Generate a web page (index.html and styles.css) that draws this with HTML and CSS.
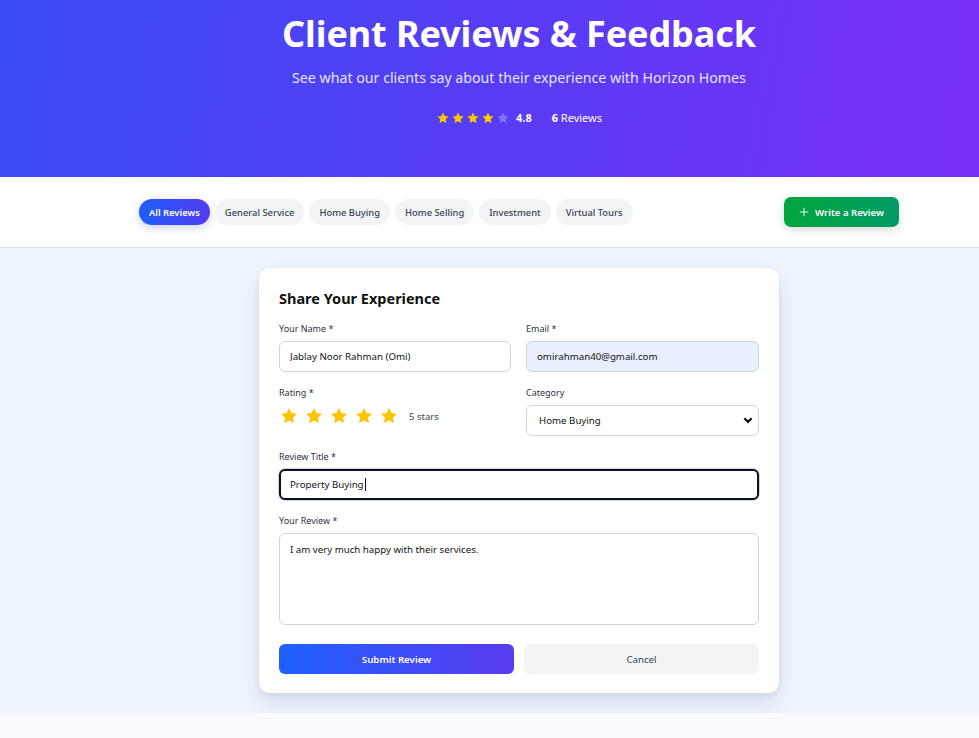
FILE: index.html
```html
<!DOCTYPE html>
<html lang="en">
<head>
<meta charset="utf-8">
<title>Client Reviews &amp; Feedback</title>
<link rel="stylesheet" href="styles.css">
</head>
<body>
<div class="page">
  <header class="hero">
    <h1 class="hero-title">Client Reviews &amp; Feedback</h1>
    <p class="hero-sub">See what our clients say about their experience with Horizon Homes</p>
    <div class="hero-stats">
      <div class="hero-stars">
        <svg class="hstar on" viewBox="0 0 24 24"><path d="M12 2.5l2.9 6 6.6.9-4.8 4.6 1.2 6.5L12 17.4l-5.9 3.1 1.2-6.5-4.8-4.6 6.6-.9z"/></svg>
        <svg class="hstar on" viewBox="0 0 24 24"><path d="M12 2.5l2.9 6 6.6.9-4.8 4.6 1.2 6.5L12 17.4l-5.9 3.1 1.2-6.5-4.8-4.6 6.6-.9z"/></svg>
        <svg class="hstar on" viewBox="0 0 24 24"><path d="M12 2.5l2.9 6 6.6.9-4.8 4.6 1.2 6.5L12 17.4l-5.9 3.1 1.2-6.5-4.8-4.6 6.6-.9z"/></svg>
        <svg class="hstar on" viewBox="0 0 24 24"><path d="M12 2.5l2.9 6 6.6.9-4.8 4.6 1.2 6.5L12 17.4l-5.9 3.1 1.2-6.5-4.8-4.6 6.6-.9z"/></svg>
        <svg class="hstar off" viewBox="0 0 24 24"><path d="M12 2.5l2.9 6 6.6.9-4.8 4.6 1.2 6.5L12 17.4l-5.9 3.1 1.2-6.5-4.8-4.6 6.6-.9z"/></svg>
      </div>
      <span class="hero-score">4.8</span>
      <span class="hero-count"><b>6</b> Reviews</span>
    </div>
  </header>

  <nav class="filterbar">
    <div class="filter-inner">
      <div class="pills">
        <button class="pill active">All Reviews</button>
        <button class="pill">General Service</button>
        <button class="pill">Home Buying</button>
        <button class="pill">Home Selling</button>
        <button class="pill">Investment</button>
        <button class="pill">Virtual Tours</button>
      </div>
      <button class="write-btn">
        <svg class="plus" viewBox="0 0 12 12"><path d="M6 1v10M1 6h10"/></svg>
        Write a Review
      </button>
    </div>
  </nav>

  <main class="main">
    <form class="card">
      <h2 class="card-title">Share Your Experience</h2>
      <div class="grid2">
        <div class="field">
          <label class="label">Your Name *</label>
          <input class="input" type="text" value="Jablay Noor Rahman (Omi)">
        </div>
        <div class="field">
          <label class="label">Email *</label>
          <input class="input autofill" type="email" value="omirahman40@gmail.com">
        </div>
      </div>
      <div class="grid2">
        <div class="field">
          <label class="label">Rating *</label>
          <div class="rating">
            <svg class="rstar" viewBox="0 0 24 24"><path d="M12 2.5l2.9 6 6.6.9-4.8 4.6 1.2 6.5L12 17.4l-5.9 3.1 1.2-6.5-4.8-4.6 6.6-.9z"/></svg>
            <svg class="rstar" viewBox="0 0 24 24"><path d="M12 2.5l2.9 6 6.6.9-4.8 4.6 1.2 6.5L12 17.4l-5.9 3.1 1.2-6.5-4.8-4.6 6.6-.9z"/></svg>
            <svg class="rstar" viewBox="0 0 24 24"><path d="M12 2.5l2.9 6 6.6.9-4.8 4.6 1.2 6.5L12 17.4l-5.9 3.1 1.2-6.5-4.8-4.6 6.6-.9z"/></svg>
            <svg class="rstar" viewBox="0 0 24 24"><path d="M12 2.5l2.9 6 6.6.9-4.8 4.6 1.2 6.5L12 17.4l-5.9 3.1 1.2-6.5-4.8-4.6 6.6-.9z"/></svg>
            <svg class="rstar" viewBox="0 0 24 24"><path d="M12 2.5l2.9 6 6.6.9-4.8 4.6 1.2 6.5L12 17.4l-5.9 3.1 1.2-6.5-4.8-4.6 6.6-.9z"/></svg>
            <span class="rating-text">5 stars</span>
          </div>
        </div>
        <div class="field">
          <label class="label">Category</label>
          <div class="select-wrap">
            <select class="input select">
              <option>Home Buying</option>
            </select>
            <svg class="chev" viewBox="0 0 12 12"><path d="M2.3 4.2L6 7.9l3.7-3.7"/></svg>
          </div>
        </div>
      </div>
      <div class="field">
        <label class="label">Review Title *</label>
        <div class="input focused">Property Buying<span class="caret"></span></div>
      </div>
      <div class="field">
        <label class="label">Your Review *</label>
        <textarea class="input textarea">I am very much happy with their services.</textarea>
      </div>
      <div class="actions">
        <button type="button" class="btn submit">Submit Review</button>
        <button type="button" class="btn cancel">Cancel</button>
      </div>
    </form>
  </main>
  <div class="after"></div>
</div>
</body>
</html>
```

FILE: styles.css
```css
* { box-sizing: border-box; }
html, body { margin: 0; padding: 0; }
body {
  overflow: hidden;
  font-family: "Noto Sans", "Open Sans", sans-serif;
  background: #f8fafd;
  color: #111827;
}
/* the page is centred on a 1038px layout; the frame shows its left 979px */
.page { width: 979px; }
.hero, .filterbar, .main { padding-left: 59px; }

.hero {
  height: 177px;
  background: linear-gradient(100deg, #3a4cf5 0%, #5a3bf5 55%, #7a2ef6 100%);
  color: #fff;
  text-align: center;
  padding-top: 10px;
}
.hero-title {
  margin: 0;
  font-size: 36px;
  line-height: 48px;
  font-weight: 700;
  letter-spacing: -0.1px;
}
.hero-sub {
  margin: 10px 0 0;
  font-size: 14.2px;
  line-height: 20px;
  color: #e3e4ff;
}
.hero-stats {
  margin-top: 22px;
  display: flex;
  justify-content: center;
  align-items: center;
  font-size: 11px;
}
.hero-stars { display: flex; gap: 1px; }
.hstar { width: 14px; height: 14px; }
.hstar.on { fill: #ffc400; }
.hstar.off { fill: #7d75f7; }
.hero-score { font-weight: 700; margin-left: 6px; }
.hero-count { margin-left: 20px; }
.hero-count b { font-weight: 700; }

.filterbar {
  background: #fff;
  border-bottom: 1px solid #d8e2ef;
  height: 71px;
  display: flex;
  align-items: center;
}
.filter-inner {
  width: 760px;
  margin: 0 auto;
  display: flex;
  justify-content: space-between;
  align-items: center;
}
.pills { display: flex; gap: 5px; }
.pill {
  border: 0;
  height: 26px;
  padding: 0 10px;
  border-radius: 13px;
  background: #f3f4f6;
  color: #374151;
  font-family: inherit;
  font-size: 9.4px;
  font-weight: 500;
}
.pill.active {
  background: linear-gradient(90deg, #1f5dfd, #4f3cef);
  color: #fff;
  font-weight: 600;
  box-shadow: 0 3px 8px rgba(60, 80, 200, 0.25);
}
.write-btn {
  border: 0;
  height: 30px;
  width: 115px;
  border-radius: 7px;
  background: linear-gradient(90deg, #00a63e, #009a66);
  color: #fff;
  font-family: inherit;
  font-size: 9.6px;
  font-weight: 600;
  display: flex;
  align-items: center;
  justify-content: center;
  gap: 6px;
  box-shadow: 0 3px 8px rgba(0, 0, 0, 0.15);
}
.plus { width: 10px; height: 10px; stroke: #d9f5e4; stroke-width: 1.3; fill: none; }

.main {
  background: #eef5ff;
  padding-top: 20px;
  padding-bottom: 20px;
}
.card {
  width: 520px;
  margin: 0 auto;
  background: #fff;
  border-radius: 11px;
  padding: 20px 20px 19px;
  box-shadow: 0 10px 20px rgba(30, 50, 90, 0.12), 0 2px 5px rgba(30, 50, 90, 0.06);
  display: flex;
  flex-direction: column;
  gap: 14px;
}
.card-title {
  margin: 0;
  font-size: 14.5px;
  line-height: 20px;
  font-weight: 700;
  color: #111;
}
.grid2 {
  display: grid;
  grid-template-columns: 232px 233px;
  column-gap: 15px;
}
.field { display: flex; flex-direction: column; }
.label {
  font-size: 9px;
  line-height: 13px;
  color: #2b3340;
  margin-bottom: 6px;
}
.input {
  height: 31px;
  border: 1px solid #d1d5db;
  border-radius: 6px;
  padding: 0 10px;
  font-family: inherit;
  font-size: 9.7px;
  color: #111;
  background: #fff;
  outline: none;
  width: 100%;
}
.input.autofill { background: #e8f0fe; }
.input.focused {
  display: flex;
  align-items: center;
  border: 2px solid #111;
  padding: 0 9px;
  box-shadow: 0 0 0 1px #c3d4fb;
}
.caret { display: inline-block; width: 1px; height: 13px; background: #111; margin-left: 1px; }
.rating { display: flex; align-items: center; height: 20px; gap: 5px; margin-top: 1px; }
.rstar { width: 20px; height: 20px; fill: #ffc400; }
.rating-text { font-size: 9.5px; color: #444; margin-left: 5px; }
.select-wrap { position: relative; }
.select { appearance: none; -webkit-appearance: none; padding-left: 12px; }
.chev {
  position: absolute;
  right: 5px;
  top: 9px;
  width: 12px;
  height: 12px;
  fill: none;
  stroke: #111;
  stroke-width: 2.2;
}
.textarea {
  height: 92px;
  padding: 9px 10px;
  resize: none;
  line-height: 14px;
}
.actions {
  display: grid;
  grid-template-columns: 1fr 1fr;
  gap: 10px;
  margin-top: 5px;
}
.btn {
  height: 30px;
  border: 0;
  border-radius: 6px;
  font-family: inherit;
  font-size: 9.7px;
}
.btn.submit {
  background: linear-gradient(90deg, #1f60fe, #5a3bef);
  color: #fff;
  font-weight: 600;
}
.btn.cancel { background: #f3f4f6; color: #374151; }
.after { height: 40px; background: #f9fbfe; }
```
